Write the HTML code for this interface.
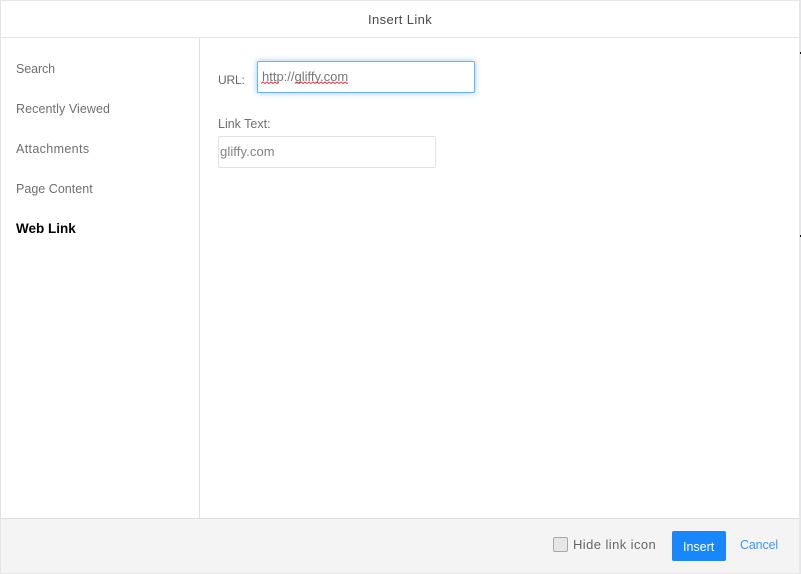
<!DOCTYPE html>
<html>
<head>
<meta charset="utf-8">
<style>
html,body{margin:0;padding:0;background:#fff;}
body{width:801px;height:574px;position:relative;overflow:hidden;font-family:"Liberation Sans",sans-serif;color:#707070;font-size:13px;}
.a{position:absolute;}
.t{position:absolute;white-space:nowrap;line-height:16px;}
</style>
</head>
<body>
<div class="a" style="left:0;top:0;width:1px;height:574px;background:#e4e4e4"></div>
<div class="a" style="left:0;top:0;width:801px;height:1px;background:#e8e8e8"></div>
<div class="a" style="left:799px;top:0;width:2px;height:574px;background:#e6e6e9"></div>
<div class="a" style="left:800px;top:52px;width:1px;height:2px;background:#111"></div>
<div class="a" style="left:800px;top:235px;width:1px;height:2px;background:#111"></div>
<div class="a" style="left:1px;top:37px;width:798px;height:1px;background:#e5e5e5"></div>
<div class="a" style="left:199px;top:38px;width:1px;height:480px;background:#dedede"></div>

<div class="t" style="left:368px;top:12px;color:#4a4a4a;letter-spacing:.38px">Insert Link</div>

<div class="t" style="left:16px;top:61px;font-size:12.5px;letter-spacing:-.1px">Search</div>
<div class="t" style="left:16px;top:101px;font-size:12.5px;letter-spacing:.08px">Recently Viewed</div>
<div class="t" style="left:16px;top:141px;font-size:12.5px;letter-spacing:.36px">Attachments</div>
<div class="t" style="left:16px;top:181px;font-size:12.5px;letter-spacing:.02px">Page Content</div>
<div class="t" style="left:16px;top:221px;font-weight:bold;color:#000;font-size:13.5px">Web Link</div>

<div class="t" style="left:218px;top:72px;font-size:12px;letter-spacing:-.15px;color:#666">URL:</div>
<div class="a" style="left:257px;top:61px;width:216px;height:30px;border:1px solid #69b4f5;border-radius:2px;box-shadow:0 0 6px rgba(90,170,245,.65);background:#fff"></div>
<div class="t" style="left:262px;top:69px;color:#777">http://gliffy.com</div>
<svg class="a" style="left:261px;top:81px" width="90" height="4" viewBox="0 0 90 4">
<path d="M0 2.500l2-1.500 2 1.500 2-1.500 2 1.500 2-1.500 2 1.500 2-1.500 2 1.500 2-1.500M34 2.500l2-1.500 2 1.500 2-1.500 2 1.500 2-1.500 2 1.500 2-1.500 2 1.500 2-1.500 2 1.500 2-1.500 2 1.500 2-1.500 2 1.500 2-1.500 2 1.500 2-1.500 2 1.500 2-1.500 2 1.500 2-1.500 2 1.500 2-1.500 2 1.500 2-1.500 2 1.500 1-.75" fill="none" stroke="#e0383a" stroke-width="1"/>
</svg>

<div class="t" style="left:218px;top:116px;font-size:12.500px;color:#707070">Link Text:</div>
<div class="a" style="left:218px;top:136px;width:216px;height:30px;border:1px solid #e2e2e2;border-radius:2px;background:#fff"></div>
<div class="t" style="left:220px;top:144px;color:#808080;letter-spacing:.1px">gliffy.com</div>

<div class="a" style="left:1px;top:518px;width:798px;height:55px;background:#f4f4f4;border-top:1px solid #dedede;box-sizing:border-box"></div>
<div class="a" style="left:0;top:573px;width:801px;height:1px;background:#e6e6e6"></div>
<div class="a" style="left:553px;top:537px;width:13px;height:13px;border:1px solid #a8a8a8;border-radius:2px;background:#e6e6e6"></div>
<div class="t" style="left:573px;top:537px;color:#666;letter-spacing:.42px">Hide link icon</div>
<div class="a" style="left:672px;top:531px;width:54px;height:30px;background:#1787fb;border-radius:2px"></div>
<div class="t" style="left:683px;top:539px;color:#fff;font-size:12.500px">Insert</div>
<div class="t" style="left:740px;top:537px;color:#3f97f6;font-size:12.500px;letter-spacing:-.15px">Cancel</div>
</body>
</html>
